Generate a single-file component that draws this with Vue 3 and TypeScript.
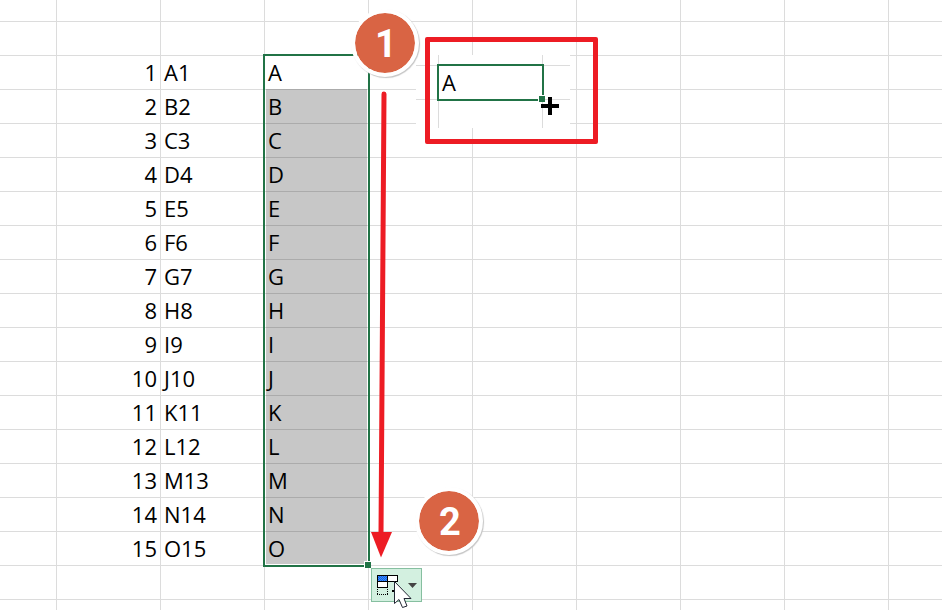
<script setup lang="ts">
interface Row {
  id: number
  code: string
  letter: string
}

const letters = 'ABCDEFGHIJKLMNO'.split('')
const rows: Row[] = letters.map((letter, i) => ({
  id: i + 1,
  code: `${letter}${i + 1}`,
  letter,
}))
const trailing = 6
</script>

<template>
  <main class="sheet">
    <table class="grid">
      <colgroup>
        <col class="first" />
        <col v-for="n in 8" :key="n" class="col" />
        <col />
      </colgroup>
      <tbody>
        <tr class="top"><td v-for="n in 10" :key="n"></td></tr>
        <tr><td v-for="n in 10" :key="n"></td></tr>
        <tr v-for="row in rows" :key="row.id">
          <td></td>
          <td class="num">{{ row.id }}</td>
          <td>{{ row.code }}</td>
          <td>{{ row.letter }}</td>
          <td v-for="n in trailing" :key="n"></td>
        </tr>
        <tr v-for="r in 2" :key="'end' + r"><td v-for="n in 10" :key="n"></td></tr>
      </tbody>
    </table>

    <div class="selection"><div class="shade"></div><i class="handle"></i></div>

    <div class="inset">
      <i class="line h one"></i><i class="line h two"></i>
      <i class="line v one"></i><i class="line v two"></i>
      <div class="active">A<i class="handle"></i></div>
      <svg class="plus" width="18" height="18" viewBox="0 0 18 18" aria-hidden="true">
        <path d="M7 0h4v7h7v4h-7v7H7v-7H0V7h7z" />
      </svg>
    </div>
    <div class="frame"></div>

    <svg class="arrow" width="22" height="468" viewBox="0 0 22 468" aria-hidden="true">
      <path d="M14 4 11 444" fill="none" stroke="#ed1c24" stroke-width="5" stroke-linecap="round" />
      <path d="M1 442h21L11 467.500z" fill="#ed1c24" />
    </svg>

    <div class="badge start">1</div>
    <div class="badge end">2</div>

    <button class="fill" type="button" aria-label="Auto Fill Options">
      <svg width="49" height="32" viewBox="0 0 49 32" aria-hidden="true">
        <defs>
          <pattern id="checks" width="2" height="2" patternUnits="userSpaceOnUse">
            <path d="M0 0h2v2H0z" fill="#3c8cff" />
            <path d="M0 0h1v1H0zM1 1h1v1H1z" fill="#1462e0" />
          </pattern>
        </defs>
        <g shape-rendering="crispEdges">
          <path d="M5 6h21v7H16v6H5z" fill="#000" />
          <path d="M6 7h9v5H6z" fill="url(#checks)" />
          <path d="M16 7h9v5h-9zM6 13h9v5H6z" fill="#fff" />
          <path d="M5.500 20v6M15.500 20v6M5 25.500h11" stroke="#000" stroke-dasharray="1 1" fill="none" />
          <path d="M20 21h3v2h-3z" />
        </g>
        <path d="M36 14h9l-4.500 5z" fill="#444" />
      </svg>
    </button>
    <svg class="pointer" width="20" height="30" viewBox="0 0 20 30" aria-hidden="true">
      <path d="M1.500 1.500v22l4.500-4 3.500 8 4.500-1.500-3-7.500h7z" fill="#fff" stroke="#222633" stroke-width="1" />
    </svg>
  </main>
</template>

<style>
body {
  margin: 0;
  background: #fff;
}
</style>

<style scoped>
.sheet {
  position: relative;
  height: 100vh;
  overflow: hidden;
  background: #fff;
  color: #000;
  font: 22px/32px "Open Sans", "Noto Sans", sans-serif;
}
.grid {
  width: 100%;
  table-layout: fixed;
  border-collapse: separate;
  border-spacing: 0;
}
.first {
  width: 57px;
}
.col {
  width: 104px;
}
td {
  box-sizing: border-box;
  height: 34px;
  padding: 0 3px;
  border-right: 1px solid #dcdcdc;
  border-bottom: 1px solid #dcdcdc;
  vertical-align: top;
  white-space: nowrap;
}
td:last-child {
  border-right: 0;
}
.top td {
  height: 22px;
}
.num {
  text-align: right;
}
.selection {
  position: absolute;
  left: 263px;
  top: 54px;
  box-sizing: border-box;
  width: 107px;
  height: 513px;
  border: 2px solid #217346;
  pointer-events: none;
}
.shade {
  position: absolute;
  inset: 33px 1px 1px;
  background: rgba(0, 0, 0, 0.22);
}
.handle {
  position: absolute;
  right: -3px;
  bottom: -3px;
  width: 6px;
  height: 6px;
  border: solid #fff;
  border-width: 1px 0 0 1px;
  background: #217346;
}
.inset {
  position: absolute;
  left: 416px;
  top: 55px;
  width: 154px;
  height: 73px;
  background: #fff;
}
.line {
  position: absolute;
  background: #dcdcdc;
}
.h {
  left: 0;
  width: 100%;
  height: 1px;
}
.v {
  top: 0;
  width: 1px;
  height: 100%;
}
.h.one {
  top: 10px;
}
.h.two {
  top: 44px;
}
.v.one {
  left: 22px;
}
.v.two {
  left: 126px;
}
.active {
  position: absolute;
  left: 21px;
  top: 9px;
  box-sizing: border-box;
  width: 107px;
  height: 37px;
  padding-left: 3px;
  border: 2px solid #217346;
  background: #fff;
}
.plus {
  position: absolute;
  left: 125px;
  top: 42px;
}
.frame {
  position: absolute;
  left: 425px;
  top: 37px;
  box-sizing: border-box;
  width: 173px;
  height: 107px;
  border: 5px solid #ed1c24;
  border-radius: 2px;
}
.arrow {
  position: absolute;
  left: 370px;
  top: 90px;
}
.badge {
  position: absolute;
  width: 60px;
  height: 60px;
  border: 4px solid #fff;
  border-radius: 50%;
  background: #d96444;
  background-clip: padding-box;
  box-shadow: 1px 1px 1px #c4c4c4;
  color: #fff;
  font: bold 38px/62px Roboto, "Liberation Sans", sans-serif;
  text-align: center;
  text-indent: 2px;
}
.start {
  left: 351px;
  top: 9px;
}
.end {
  left: 415px;
  top: 487px;
}
.fill {
  position: absolute;
  left: 371px;
  top: 568px;
  box-sizing: border-box;
  width: 51px;
  height: 34px;
  padding: 0;
  border: 1px solid #86bfa0;
  background: #d3f0e0;
}
.fill svg {
  display: block;
}
.pointer {
  position: absolute;
  left: 393px;
  top: 580px;
}
</style>
